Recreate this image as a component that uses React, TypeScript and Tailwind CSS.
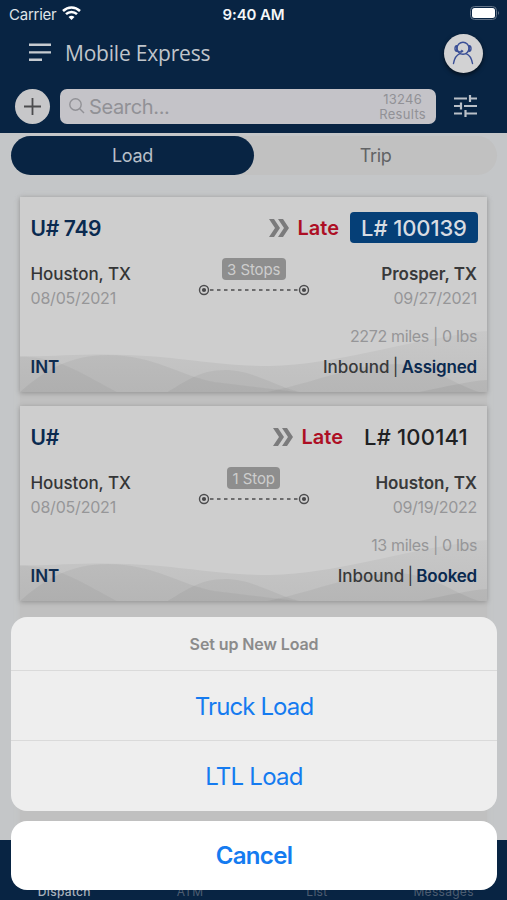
import React from 'react';

const inter = "font-['Inter',sans-serif]";

type Load = {
  unit: string;
  load: string;
  selected: boolean;
  to: string;
  toDate: string;
  stops: string;
  miles: string;
  status: string;
};

const loads: Load[] = [
  { unit: 'U# 749', load: 'L# 100139', selected: true, to: 'Prosper, TX', toDate: '09/27/2021', stops: '3 Stops', miles: '2272 miles | 0 lbs', status: 'Assigned' },
  { unit: 'U#', load: 'L# 100141', selected: false, to: 'Houston, TX', toDate: '09/19/2022', stops: '1 Stop', miles: '13 miles | 0 lbs', status: 'Booked' },
];

function Waves() {
  return (
    <svg className="absolute inset-x-0 bottom-0 h-16 w-full" viewBox="0 0 468 64" preserveAspectRatio="none">
      <defs>
        <linearGradient id="haze" x1="0" y1="0" x2="0" y2="1">
          <stop offset="0" stopColor="#c8c8c8" />
          <stop offset="1" stopColor="#bfbfbf" />
        </linearGradient>
      </defs>
      <path d="M0 28 C30 29 65 25 108 27 C165 29 195 38 250 38 C320 36 370 16 458 3.7 L468 3 V64 H0Z" fill="url(#haze)" />
      <path d="M0 64 C25 42 50 27 88 27 C135 27 160 48 195 54 L278 64Z" fill="#000" fillOpacity=".045" />
      <path d="M0 29 C30 29 40 35 60 44 L97 64 H0Z" fill="#000" fillOpacity=".035" />
      <path d="M148 64 C165 54 180 42 205 42 C233 42 250 56 280 64Z" fill="#000" fillOpacity=".045" />
      <path d="M248 64 C300 53 335 36 378 36 C415 38 430 54 460 64Z" fill="#000" fillOpacity=".045" />
      <path d="M400 64 C430 58 450 53 468 52 V64Z" fill="#000" fillOpacity=".05" />
    </svg>
  );
}

function Route() {
  return (
    <svg className="block h-3 w-[112px]" viewBox="0 0 112 12" fill="none" stroke="#4c4c4e">
      <path d="M12 6H100" strokeWidth="1.5" strokeDasharray="3.5 3.5" />
      <circle cx="6" cy="6" r="4.5" strokeWidth="1.4" />
      <circle cx="106" cy="6" r="4.5" strokeWidth="1.4" />
      <circle cx="6" cy="6" r="2.1" fill="#464648" stroke="none" />
      <circle cx="106" cy="6" r="2.1" fill="#464648" stroke="none" />
    </svg>
  );
}

function LoadCard({ item }: { item: Load }) {
  return (
    <article className="relative h-[195px] bg-[#cecece] pl-[10.5px] pr-2.5 pt-[15px] shadow-[0_1px_5px_rgba(0,0,0,0.25)]">
      <Waves />
      <div className="relative -mr-px flex h-[31px] items-center justify-between text-[20px] font-semibold leading-none">
        <span className="pt-px text-[21px] tracking-[-0.3px] text-[#0a2a50]">{item.unit}</span>
        <div className="flex items-center">
          <svg className="mr-[9px] h-[18px] w-5" viewBox="0 0 20 18" fill="#7b7b7c">
            <path d="M0 0H5L11 9L5 18H0L6 9Z" />
            <path d="M9 0H14L20 9L14 18H9L15 9Z" />
          </svg>
          <span className="mr-[11px] text-[#ad0f24]">Late</span>
          <span className={item.selected ? 'flex h-[31px] w-32 items-center justify-center rounded-[4px] bg-[#053f77] text-[22px] font-medium tracking-[-0.1px] text-[#d8dce2]' : 'flex h-[31px] w-[124px] items-center justify-center text-[22px] font-medium tracking-[0.2px] text-[#202123]'}>
            {item.load}
          </span>
        </div>
      </div>
      <div className="relative flex justify-between pt-[17px] text-[17px] leading-[26px]">
        <div className="w-[130px]">
          <p className="tracking-[-0.05px] h-[26px] pt-px font-medium text-[#343536]">Houston, TX</p>
          <p className="h-6 text-[16px] leading-6 tracking-[-0.2px] text-[#969698]">08/05/2021</p>
        </div>
        <div className="-mt-[2px] flex flex-col items-center">
          <span className="flex h-[22px] items-center rounded-[4px] bg-[#8e8e8e] px-[5.5px] text-[15px] leading-none tracking-[-0.1px] text-[#cdcdcd]">{item.stops}</span>
          <div className="pt-1"><Route /></div>
        </div>
        <div className="w-[130px] text-right">
          <p className="h-[26px] pt-px font-semibold tracking-[-0.05px] text-[#38393a]">{item.to}</p>
          <p className="h-6 text-[16px] leading-6 tracking-[-0.3px] text-[#969698]">{item.toDate}</p>
        </div>
      </div>
      <p className="relative mt-[14px] text-right text-[16px] leading-6 tracking-[-0.35px] text-[#969698]">{item.miles}</p>
      <div className="relative mt-[6.5px] flex justify-between text-[17px] font-semibold leading-6">
        <span className="text-[#0f2c50]">INT</span>
        <div className="flex">
          <span className="font-medium text-[#38393a]">Inbound</span>
          <span className="mx-[2px] w-2 text-center font-normal text-[#38393a]">|</span>
          <span className="tracking-[-0.2px] text-[#0a2a50]">{item.status}</span>
        </div>
      </div>
    </article>
  );
}

export default function App() {
  return (
    <main className={`relative flex h-[900px] w-[507px] flex-col overflow-hidden bg-[#c4c6c8] ${inter}`}>
      <header className="h-[133px] shrink-0 bg-[#082443]">
        <div className="grid h-7 grid-cols-3 items-center pl-[9px] pr-[7px] text-[15px] leading-none text-[#f4f6f8]">
          <div className="flex items-center gap-[6px]">
            <span className="tracking-[-0.25px] text-[#dfe3e8]">Carrier</span>
            <svg className="-mt-0.5 h-[14px] w-[19px]" viewBox="0 0 19 14" fill="none" stroke="#fff" strokeWidth="2.5">
              <path d="M1 5C6 .2 13 .2 18 5M4 8.2C7 5.2 12 5.2 15 8.2" />
              <path d="M9.5 14L6.5 11Q9.5 8.5 12.5 11Z" fill="#fff" stroke="none" />
            </svg>
          </div>
          <span className="pr-[2px] text-center font-semibold tracking-[-0.15px]">9:40 AM</span>
          <svg className="-mt-0.5 h-[14px] w-[30px] justify-self-end" viewBox="0 0 30 14">
            <rect x=".5" y=".5" width="26" height="13" rx="4" fill="none" stroke="#647488" />
            <rect x="2" y="2" width="23" height="10" rx="2.5" fill="#fff" />
            <path d="M28 5q2 2 0 4z" fill="#647488" />
          </svg>
        </div>
        <div className="flex h-[50px] items-center pl-[29px] pr-[24.5px]">
          <svg className="h-5 w-[22px]" viewBox="0 0 22 20" stroke="#c6cbd1" strokeWidth="2.4"><path d="M0 1.8H22M0 9.4H22M0 16.8H13" /></svg>
          <h1 className="ml-3.5 font-['Open_Sans',sans-serif] text-[21px] leading-none tracking-[-0.2px] text-[#c0c5cb]">Mobile Express</h1>
          <div className="ml-auto flex size-[39px] items-center justify-center rounded-full bg-[#d2d2d3] shadow-[0_2px_4px_rgba(0,0,0,0.6)]">
            <svg className="size-6" viewBox="0 0 24 24" fill="none" stroke="#3a4f96" strokeWidth="1.4" strokeLinecap="round">
              <circle cx="12" cy="7.3" r="6" />
              <path d="M5.8 4.8Q4 5 4 7.6T5.8 10.4ZM18.2 4.8Q20 5 20 7.6T18.2 10.4ZM6 9.5Q7.5 11.3 10 11" />
              <path d="M2.5 22.5C3.5 16.5 6.5 13.5 9 12.6M21.5 22.5C20.5 16.5 17.5 13.5 15 12.6" />
              <circle cx="10.8" cy="10.2" r="1" fill="#3a4f96" strokeWidth=".6" />
            </svg>
          </div>
        </div>
        <div className="flex h-[56px] items-center pl-[15px] pr-[30px]">
          <button className="flex size-[35px] items-center justify-center rounded-full bg-[#c7c7c9]">
            <svg className="size-[17px]" viewBox="0 0 17 17" stroke="#4c4c4e" strokeWidth="1.8"><path d="M8.5 0V17M0 8.5H17" /></svg>
          </button>
          <div className="ml-[9.5px] flex h-[35px] w-[376.5px] items-center rounded-[7px] bg-[#c4c3c8] pl-[9px] pr-[10px] text-[#919196]">
            <svg className="size-4" viewBox="0 0 16 16" fill="none" stroke="#919196" strokeWidth="1.4"><circle cx="6.5" cy="6.5" r="5.7" /><path d="M10.5 10.5L15 15" /></svg>
            <span className="ml-[4.5px] pt-px text-[20px] leading-none tracking-[-0.35px]">Search...</span>
            <span className="ml-auto pt-px text-center text-[13px] leading-[14.5px] tracking-[0.3px]">13246<br />Results</span>
          </div>
          <svg className="ml-auto h-[22px] w-[23px]" viewBox="0 0 23 22" stroke="#bac0c8" strokeWidth="2.2">
            <path d="M0 3.5H13M16 0V7M16 3.5H23M0 11H7M7 7.5V14.5M10 11H23M0 18.5H8M11.5 15V22M11.5 18.5H23" />
          </svg>
        </div>
      </header>
      <section className="px-[11px] pt-[3px]">
        <div className="flex h-[39px] w-[486px] rounded-full bg-[#c1c1c1] text-[18px] tracking-[-0.35px]">
          <div className="flex w-[243px] items-center justify-center rounded-full bg-[#082443] text-[#b8c0ca]">Load</div>
          <div className="flex w-[243px] items-center justify-center text-[#626365]">Trip</div>
        </div>
        <div className="mx-[9px] mt-[22px] flex h-[643px] flex-col gap-[14px] bg-[#c0c0c0] shadow-[0_0_6px_#c0c0c0]">
          {loads.map((item) => <LoadCard key={item.load} item={item} />)}
        </div>
      </section>
      <footer className="relative mt-auto grid h-[60px] grid-cols-4 items-end bg-[#082443] pb-px text-center text-[12px] leading-[14px] tracking-[0.3px] text-[#4e5e72]">
        <span className="pl-0.5 font-medium text-[#a8b1bc]">Dispatch</span><span>ATM</span><span>List</span><span>Messages</span>
      </footer>
      <div className="absolute left-[11px] top-[617px] flex w-[486px] flex-col gap-[10px] text-center text-[#157bf0]">
        <div className="overflow-hidden rounded-[16px] bg-[#eeeeee]">
          <h2 className="h-[54px] border-b border-[#dadada] text-[16px] font-semibold leading-[54px] tracking-[-0.1px] text-[#8b8b8b]">Set up New Load</h2>
          <button className="block h-[70px] w-full border-b border-[#dadada] pt-0.5 text-[24px] tracking-[-0.9px]">Truck Load</button>
          <button className="block h-[70px] w-full pt-0.5 text-[24px] tracking-[-0.75px]">LTL Load</button>
        </div>
        <button className="h-[69px] rounded-[16px] bg-white pt-px text-[24px] font-semibold tracking-[-0.65px]">Cancel</button>
      </div>
    </main>
  );
}
